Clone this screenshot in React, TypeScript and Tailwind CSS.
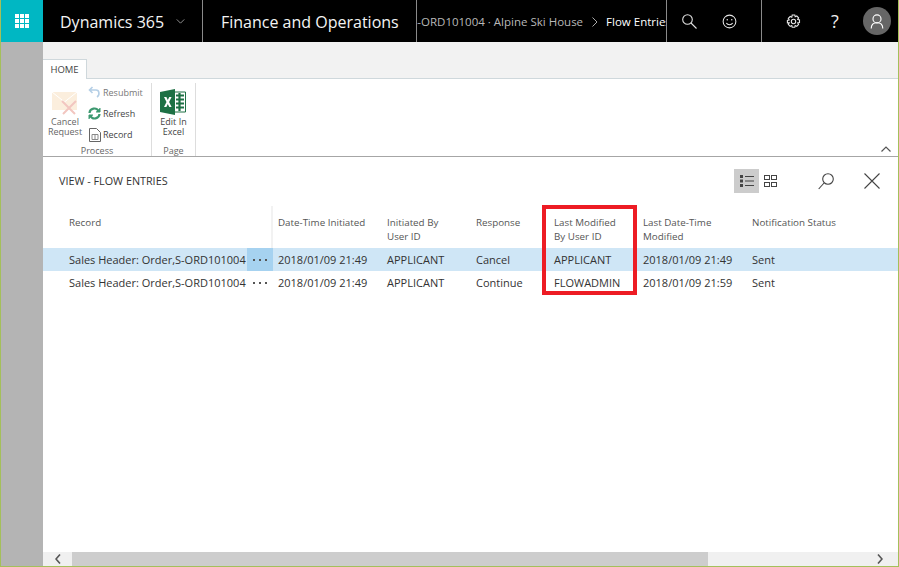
import React from 'react'

const FONT = 'font-["Open_Sans","Noto_Sans",sans-serif]'

const HEADERS = [
  { lines: ['Date-Time Initiated'], w: 'w-[109px]' },
  { lines: ['Initiated By', 'User ID'], w: 'w-[89px]' },
  { lines: ['Response'], w: 'w-[78px]' },
  { lines: ['Last Modified', 'By User ID'], w: 'w-[89px]' },
  { lines: ['Last Date-Time', 'Modified'], w: 'w-[109px]' },
  { lines: ['Notification Status'], w: 'w-[140px]' },
]

const ROWS = [
  { cells: ['2018/01/09 21:49', 'APPLICANT', 'Cancel', 'APPLICANT', '2018/01/09 21:49', 'Sent'], selected: true },
  { cells: ['2018/01/09 21:49', 'APPLICANT', 'Continue', 'FLOWADMIN', '2018/01/09 21:59', 'Sent'], selected: false },
]

function Waffle() {
  return (
    <svg width="14" height="14" viewBox="0 0 14 14" fill="#fff">
      {[0, 5, 10].map((y) => [0, 5, 10].map((x) => <rect key={`${x}-${y}`} x={x} y={y} width="4" height="4" />))}
    </svg>
  )
}

function TopIcons() {
  return (
    <>
      <div className="w-[95px] h-full shrink-0 flex items-center border-r border-[#8a8a8a]">
        <svg className="ml-[15px]" width="15" height="15" viewBox="0 0 15 15" fill="none" stroke="#e0e0e0" strokeWidth="1.100">
          <circle cx="5.500" cy="5.500" r="4.800" />
          <path d="M9 9l5.500 5.500" />
        </svg>
        <svg className="ml-[25px]" width="15" height="15" viewBox="0 0 16 16" fill="none" stroke="#e8e8e8" strokeWidth="1.100">
          <circle cx="8" cy="8" r="6.800" />
          <circle cx="5.600" cy="6" r=".8" fill="#e8e8e8" stroke="none" />
          <circle cx="10.400" cy="6" r=".8" fill="#e8e8e8" stroke="none" />
          <path d="M4.600 9.600c1.600 2.400 5.200 2.400 6.800 0" />
        </svg>
      </div>
      <div className="flex-1 h-full flex items-center">
        <svg className="ml-[24px]" width="15" height="15" viewBox="0 0 15 15" fill="none" stroke="#e8e8e8" strokeWidth="1.100">
          <circle cx="7.500" cy="7.500" r="2.200" />
          <path d="M6.200 1h2.600l.4 1.800 1.600-.8 1.800 1.800-.9 1.600 1.800.5v2.600l-1.800.4.9 1.600-1.800 1.900-1.600-.9-.4 1.800H6.200l-.4-1.800-1.600.9-1.900-1.900.9-1.600L1.400 8.900V6.400l1.800-.5-.9-1.600L4.200 2.500l1.600.8z" />
        </svg>
        <span className="ml-[30px] text-[18px] leading-none text-[#eeeeee]">?</span>
        <div className="ml-[24px] w-[28px] h-[28px] rounded-full bg-[#666666] flex items-center justify-center">
          <svg width="14" height="17" viewBox="0 0 16 18" fill="none" stroke="#fff" strokeWidth="1.300">
            <circle cx="8" cy="6" r="4.600" />
            <path d="M1.400 17c0-4 2.600-6.600 6.600-6.600s6.600 2.600 6.600 6.600" />
          </svg>
        </div>
      </div>
    </>
  )
}

function TopBar() {
  return (
    <div className="h-[42px] shrink-0 flex items-center bg-black text-white">
      <div className="w-[42px] h-full shrink-0 bg-[#00b7c3] flex items-center justify-center">
        <Waffle />
      </div>
      <div className="w-[160px] h-full shrink-0 flex items-center pl-[17px] pt-[1px] gap-[12px] border-r border-[#8a8a8a]">
        <span className="text-[16px] text-[#f4f4f4] whitespace-nowrap">Dynamics 365</span>
        <svg width="9" height="5" viewBox="0 0 10 6" fill="none" stroke="#aaa" strokeWidth="1">
          <path d="M.5.5 5 5 9.500.5" />
        </svg>
      </div>
      <div className="w-[214px] h-full shrink-0 flex items-center pl-[18px] pt-[1px] border-r border-[#8a8a8a]">
        <span className="text-[16px] text-[#f4f4f4] whitespace-nowrap">Finance and Operations</span>
      </div>
      <div className="w-[250px] h-full shrink-0 flex items-center pt-[1px] overflow-hidden border-r border-[#8a8a8a] text-[11.500px] whitespace-nowrap">
        <span className="ml-[-6px] text-[#b8b8b8]">S-ORD101004 · Alpine Ski House</span>
        <svg className="ml-[9px] mr-[8px] shrink-0" width="6" height="10" viewBox="0 0 6 10" fill="none" stroke="#aaa" strokeWidth="1">
          <path d="M.5.5 5 5 .5 9.500" />
        </svg>
        <span className="font-medium text-white">Flow Entries</span>
      </div>
      <TopIcons />
    </div>
  )
}

function EnvelopeIcon() {
  return (
    <svg width="26" height="23" viewBox="0 0 26 23">
      <path d="M0 0h25v18H0z" fill="#fbeedd" />
      <path d="M0 0l12.500 10L25 0" fill="none" stroke="#fff" strokeWidth="1" />
      <path d="M10 9l13 13M24 9 11 22" stroke="#f2c6c0" strokeWidth="2" />
    </svg>
  )
}

function ExcelIcon() {
  return (
    <svg width="26" height="26" viewBox="0 0 26 26">
      <path d="M13 3h12.500v20H13z" fill="#fff" stroke="#1e7145" />
      <path d="M16 6.500h8M16 10.500h8M16 14.500h8M16 18.500h8M19.500 4v18" stroke="#1e7145" strokeWidth="2.200" fill="none" />
      <path d="M0 3 15 0v26L0 23z" fill="#1e7145" />
      <path d="M4 8h2.400l1.400 3 1.500-3h2.300l-2.500 5 2.500 5H9.300l-1.500-3-1.400 3H4l2.500-5z" fill="#fff" />
    </svg>
  )
}

function SmallAction({ label, icon, dim }: { label: string; icon: React.ReactNode; dim?: boolean }) {
  return (
    <div className="flex items-center h-[21px]">
      <div className="w-[15px] flex justify-center">{icon}</div>
      <span className={`ml-[1px] text-[9px] ${dim ? 'text-[#777777]' : 'text-[#444444]'}`}>{label}</span>
    </div>
  )
}

function Ribbon() {
  return (
    <>
      <div className="h-[37px] shrink-0 bg-[#f2f2f2] border-b border-[#cfd8dc] flex items-end">
        <div className="w-[44px] h-[20px] mb-[-1px] pt-[2px] bg-white border border-b-0 border-[#cfd8dc] border-l-0 flex items-center justify-center text-[9.500px] text-[#444444]">
          HOME
        </div>
      </div>
      <div className="h-[78px] shrink-0 border-b border-[#a6a6a6] flex relative">
        <div className="w-[109px] shrink-0 border-r border-[#dddddd] mt-[4px] flex flex-col">
          <div className="flex flex-1 min-h-0">
            <div className="w-[44px] flex flex-col items-center pt-[9px]">
              <EnvelopeIcon />
              <span className="text-[9px] leading-[10px] text-[#666666] text-center mt-[2px] whitespace-nowrap">Cancel<br />Request</span>
            </div>
            <div className="flex flex-col mt-[-1px]">
              <SmallAction
                dim
                label="Resubmit"
                icon={
                  <svg width="13" height="13" viewBox="0 0 13 13" fill="none" stroke="#b5cfe6" strokeWidth="1.600">
                    <path d="M4.500 1 1.500 4l3 3M2 4h6c3.500 0 4 5 1 7" />
                  </svg>
                }
              />
              <SmallAction
                label="Refresh"
                icon={
                  <svg width="13" height="13" viewBox="0 0 13 13" fill="none" stroke="#3d9970" strokeWidth="2.200">
                    <path d="M1.500 6c.4-5 7-6 9-2M11.500 7c-.4 5-7 6-9 2" />
                    <path d="M12 1v4H8M1 12V8h4" fill="#3d9970" strokeWidth="1" />
                  </svg>
                }
              />
              <SmallAction
                label="Record"
                icon={
                  <svg width="12" height="14" viewBox="0 0 12 14" fill="#fff" stroke="#666" strokeWidth="1">
                    <path d="M.5.500h7l4 4v9H.5z" />
                    <path d="M3 6.500h6v5H3zM6 6.500v5" stroke="#888" />
                  </svg>
                }
              />
            </div>
          </div>
          <div className="h-[10px] shrink-0 text-center text-[9px] leading-[10px] text-[#666666]">Process</div>
        </div>
        <div className="w-[44px] shrink-0 border-r border-[#dddddd] mt-[4px] flex flex-col items-center">
          <div className="flex-1 min-h-0 flex flex-col items-center pt-[6px]">
            <ExcelIcon />
            <span className="text-[9px] leading-[10px] text-[#444444] text-center mt-[2px]">Edit In<br />Excel</span>
          </div>
          <div className="h-[10px] shrink-0 text-[9px] leading-[10px] text-[#666666]">Page</div>
        </div>
        <svg className="absolute right-[7px] bottom-[4px]" width="10" height="6" viewBox="0 0 10 6" fill="none" stroke="#555" strokeWidth="1.200">
          <path d="M.5 5.500 5 1l4.500 4.500" />
        </svg>
      </div>
    </>
  )
}

function ViewBar() {
  return (
    <div className="h-[49px] shrink-0 flex items-center pl-[16px]">
      <span className="text-[10.800px] text-[#333333]">VIEW - FLOW ENTRIES</span>
      <div className="ml-auto flex items-center mb-[1px]">
        <div className="w-[25px] h-[24px] bg-[#cccccc] flex items-center justify-center">
          <svg width="14" height="12" viewBox="0 0 14 12" fill="#444">
            <rect x="0" y="0" width="3" height="3" />
            <rect x="0" y="4.500" width="3" height="3" />
            <rect x="0" y="9" width="3" height="3" />
            <path d="M5 1h9v1H5zM5 5.500h9v1H5zM5 10h9v1H5z" />
          </svg>
        </div>
        <svg className="ml-[5px]" width="13" height="12" viewBox="0 0 13 12" fill="none" stroke="#444" strokeWidth="1">
          <rect x=".5" y=".5" width="5" height="4" />
          <rect x="7.500" y=".5" width="5" height="4" />
          <rect x=".5" y="7.500" width="5" height="4" />
          <rect x="7.500" y="7.500" width="5" height="4" />
        </svg>
        <svg className="ml-[41px]" width="16" height="17" viewBox="0 0 16 17" fill="none" stroke="#444" strokeWidth="1.100">
          <circle cx="10" cy="6" r="5.300" />
          <path d="M6 10 .7 16" />
        </svg>
        <svg className="ml-[30px] mr-[18px]" width="16" height="16" viewBox="0 0 16 16" fill="none" stroke="#444" strokeWidth="1.100">
          <path d="M.5.500l15 15M15.500.5l-15 15" />
        </svg>
      </div>
    </div>
  )
}

function Grid() {
  return (
    <div className="relative flex-1 min-h-0">
      <div className="flex h-[42px]">
        <div className="w-[230px] shrink-0 pl-[26px] pt-[10px] text-[9.800px] leading-[14px] text-[#555555] border-r-2 border-[#f2f2f2]">Record</div>
        {HEADERS.map((h) => (
          <div key={h.lines[0]} className={`${h.w} shrink-0 pl-[5px] pt-[10px] text-[9.800px] leading-[14px] text-[#555555] whitespace-nowrap`}>
            {h.lines.map((l) => <div key={l}>{l}</div>)}
          </div>
        ))}
      </div>
      {ROWS.map((row, i) => (
        <div key={i} className={`flex h-[23px] items-center text-[11px] text-[#333333] whitespace-nowrap ${row.selected ? 'bg-[#cfe6f6]' : ''}`}>
          <div className="w-[204px] shrink-0 pl-[26px] pt-[1px]">Sales Header: Order,S-ORD101004</div>
          <div className={`w-[26px] h-full shrink-0 flex items-center justify-center ${row.selected ? 'bg-[#a6d2f0]' : ''}`}>
            <svg width="14" height="2" viewBox="0 0 14 2" fill="#555">
              <rect x="0" width="2" height="2" />
              <rect x="6" width="2" height="2" />
              <rect x="12" width="2" height="2" />
            </svg>
          </div>
          {row.cells.map((c, j) => (
            <div key={j} className={`${HEADERS[j].w} shrink-0 pl-[5px] pt-[1px]`}>{c}</div>
          ))}
        </div>
      ))}
      {/* red annotation drawn over the grid */}
      <div className="absolute left-[499px] top-[-1px] w-[95px] h-[90px] border-4 border-[#ed1c24]" />
    </div>
  )
}

function ScrollBar() {
  return (
    <div className="h-[14px] shrink-0 bg-[#f0f0f0] flex items-center">
      <div className="w-[29px] h-full shrink-0 flex items-center justify-center">
        <svg width="6" height="10" viewBox="0 0 6 10" fill="none" stroke="#555" strokeWidth="1.600">
          <path d="M5 .5 1 5l4 4.500" />
        </svg>
      </div>
      <div className="w-[636px] h-full shrink-0 bg-[#cdcdcd]" />
      <div className="flex-1" />
      <div className="w-[37px] h-full shrink-0 flex items-center justify-center">
        <svg width="6" height="10" viewBox="0 0 6 10" fill="none" stroke="#555" strokeWidth="1.600">
          <path d="M1 .5 5 5 1 9.500" />
        </svg>
      </div>
    </div>
  )
}

export default function App() {
  return (
    <div className={`w-[899px] h-[567px] flex flex-col overflow-hidden border-x border-b border-[#a4c05a] bg-white ${FONT}`}>
      <TopBar />
      <div className="flex flex-1 min-h-0">
        <div className="w-[42px] shrink-0 bg-[#b4b4b4]" />
        <div className="flex-1 min-w-0 flex flex-col">
          <Ribbon />
          <ViewBar />
          <Grid />
          <ScrollBar />
        </div>
      </div>
    </div>
  )
}
